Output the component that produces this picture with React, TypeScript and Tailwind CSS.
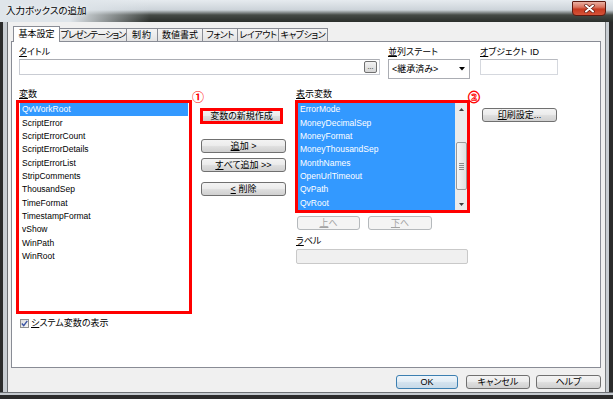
import React from "react";

const btn =
  "flex items-center justify-center border rounded-[3px] text-[9px] leading-none border-[#707070] text-black bg-[linear-gradient(to_bottom,#f3f3f3_0%,#ececec_45%,#dedede_55%,#d0d0d0_100%)]";
const btnOff =
  "flex items-center justify-center border rounded-[3px] text-[9px] leading-none border-[#b5b9bc] text-[#a3a3a3] bg-[#f4f4f4]";

function U({ children }: { children: React.ReactNode }) {
  return <span className="underline underline-offset-[1px]">{children}</span>;
}

const leftItems = [
  "QvWorkRoot",
  "ScriptError",
  "ScriptErrorCount",
  "ScriptErrorDetails",
  "ScriptErrorList",
  "StripComments",
  "ThousandSep",
  "TimeFormat",
  "TimestampFormat",
  "vShow",
  "WinPath",
  "WinRoot",
];

const rightItems = [
  "ErrorMode",
  "MoneyDecimalSep",
  "MoneyFormat",
  "MoneyThousandSep",
  "MonthNames",
  "OpenUrlTimeout",
  "QvPath",
  "QvRoot",
];

const tabs = [
  { t: "プレゼンテーション", w: "w-[68px] tracking-[-0.9px]" },
  { t: "制約", w: "w-[32px] tracking-[1px]" },
  { t: "数値書式", w: "w-[46px]" },
  { t: "フォント", w: "w-[36px] tracking-[-0.4px]" },
  { t: "レイアウト", w: "w-[42px] tracking-[-0.4px]" },
  { t: "キャプション", w: "w-[50px] tracking-[-0.4px]" },
];

export default function App() {
  return (
    <div className="w-[613px] h-[399px] flex flex-col overflow-hidden font-['Liberation_Sans','Noto_Sans_CJK_JP',sans-serif] [font-feature-settings:'palt'] text-black select-none">
      {/* Title bar */}
      <div className="h-[22px] flex items-start bg-[linear-gradient(to_right,#dfe5ea_0px,#dfe5ea_70px,rgba(223,229,234,0)_150px),linear-gradient(to_bottom,#e6ebef_0px,#ccd3d9_10px,#454a46_15px,#2a2e2b_22px)]">
        <span className="ml-[6px] mt-[5px] text-[9.5px] leading-[12px] [text-shadow:0_0_5px_#ffffff]">
          入力ボックスの追加
        </span>
        <div className="ml-auto mr-[7px] mt-[1px] w-[34px] h-[15px] rounded-b-[4px] rounded-t-[1px] border border-[#5e1a10] bg-[linear-gradient(to_bottom,#eab0a2_0%,#d9735e_40%,#c73a20_55%,#d4533a_100%)] flex items-center justify-center">
          <svg width="11" height="9" viewBox="0 0 11 9">
            <path d="M2 1.5 L9 7.5 M9 1.5 L2 7.5" stroke="#5a1a12" strokeWidth="3.4" strokeLinecap="round" />
            <path d="M2 1.5 L9 7.5 M9 1.5 L2 7.5" stroke="#ffffff" strokeWidth="2" strokeLinecap="round" />
          </svg>
        </div>
      </div>

      <div className="flex h-[370px]">
        {/* left frame */}
        <div className="w-[9px] bg-[linear-gradient(to_right,#2b2b2b_0px,#2b2b2b_3px,#c8cdd2_3px,#c8cdd2_7px,#6d7074_7px,#6d7074_8px,#f0f0f0_8px)]" />

        {/* client */}
        <div className="w-[595px] bg-[#f0f0f0] flex flex-col pt-[4px] pl-[2px] pr-[3px]">
          {/* tabs */}
          <div className="flex items-end h-[15px] pl-[2px]">
            <div className="relative z-10 w-[47px] h-[16px] -mb-px bg-white border border-b-0 border-[#898c95] flex items-center justify-center text-[9px] leading-none">
              基本設定
            </div>
            {tabs.map((tb) => (
              <div
                key={tb.t}
                className={
                  tb.w +
                  " h-[13px] -ml-px border border-b-0 border-[#898c95] bg-[linear-gradient(to_bottom,#f4f4f4,#e3e3e3)] flex items-center justify-center text-[9px] leading-none whitespace-nowrap overflow-hidden"
                }
              >
                {tb.t}
              </div>
            ))}
          </div>

          {/* panel */}
          <div className="h-[327px] border border-[#898c95] bg-white pt-[4px] pl-[4px] flex flex-col">
            {/* row 1 */}
            <div className="flex items-start">
              <div className="ml-[3px] w-[361px] flex flex-col">
                <div className="h-[12px] text-[9px] leading-[12px]">
                  <U>タ</U>イトル
                </div>
                <div className="mt-[1px] h-[16px] bg-white border border-[#c9ccd3] border-t-[#abadb3] flex items-center justify-end pr-[2px]">
                  <div className="w-[13px] h-[12px] rounded-[2px] border border-[#707070] bg-[linear-gradient(to_bottom,#f3f3f3,#d6d6d6)] flex items-end justify-center pb-[2px] text-[7px] leading-none">
                    ...
                  </div>
                </div>
              </div>
              <div className="ml-[8px] w-[82px] flex flex-col">
                <div className="h-[12px] text-[9px] leading-[12px] whitespace-nowrap">
                  <U>並</U>列ステート
                </div>
                <div className="mt-[1px] h-[20px] bg-white border border-[#abadb3] flex items-center pl-[3px] pr-[4px] text-[9px] leading-none">
                  <span>&lt;継承済み&gt;</span>
                  <svg className="ml-auto" width="6" height="4" viewBox="0 0 6 4">
                    <path d="M0 0 H6 L3 3.5 Z" fill="#000" />
                  </svg>
                </div>
              </div>
              <div className="ml-[10px] w-[78px] flex flex-col">
                <div className="h-[12px] text-[9px] leading-[12px] whitespace-nowrap">
                  <U>オ</U>ブジェクト ID
                </div>
                <div className="mt-[1px] h-[16px] bg-white border border-[#d5d8de] border-t-[#b8bac0]" />
              </div>
            </div>

            {/* row 2 */}
            <div className="mt-[9px] flex items-start">
              {/* left column */}
              <div className="w-[176px] flex flex-col">
                <div className="h-[12px] pl-[3px] text-[9px] leading-[12px]">
                  <U>変</U>数
                </div>
                <div className="relative h-[214px] border-[3px] border-[#ff0000] bg-white flex flex-col">
                  {leftItems.map((it, i) => (
                    <div
                      key={it}
                      className={
                        i === 0
                          ? "h-[13.34px] mx-[1px] pl-[2px] flex items-center bg-[#3399ff] text-white text-[8.5px] leading-none"
                          : "h-[13.34px] mx-[1px] pl-[2px] flex items-center text-[8.5px] leading-none"
                      }
                    >
                      {it}
                    </div>
                  ))}
                  <span className="absolute left-[173px] top-[-11px] text-[12px] leading-[12px] font-bold text-[#ff0000]">
                    ①
                  </span>
                </div>
                <div className="mt-[4px] pl-[4px] flex items-center h-[10px]">
                  <div className="w-[9px] h-[9px] border border-[#8e8f8f] bg-[linear-gradient(135deg,#dcdcdc,#f7f7f7)] flex items-center justify-center">
                    <svg width="7" height="7" viewBox="0 0 7 7">
                      <path d="M0.8 3.6 L2.7 5.6 L6.3 0.9" stroke="#3a54a4" strokeWidth="1.4" fill="none" />
                    </svg>
                  </div>
                  <span className="ml-[2px] text-[9px] leading-none">
                    <U>シ</U>ステム変数の表示
                  </span>
                </div>
              </div>

              {/* middle column */}
              <div className="ml-[8px] w-[87px] pt-[20px] flex flex-col">
                <div className="w-[83px] h-[16px] border-[3px] border-[#ff0000] bg-[#dedede] flex">
                  <div className="flex-1 flex items-center justify-center bg-[linear-gradient(to_bottom,#f3f3f3_0%,#ececec_45%,#dedede_55%,#d0d0d0_100%)] text-[9px] leading-none">
                    変数の新規作成
                  </div>
                </div>
                <div className={btn + " ml-[1px] mt-[15px] w-[85px] h-[14px]"}>
                  <U>追</U>加&nbsp;&gt;
                </div>
                <div className={btn + " ml-[1px] mt-[5px] w-[85px] h-[14px]"}>
                  <U>す</U>べて追加&nbsp;&gt;&gt;
                </div>
                <div className={btn + " ml-[1px] mt-[10px] w-[85px] h-[14px]"}>
                  <U>&lt;</U>&nbsp;削除
                </div>
              </div>

              {/* right column */}
              <div className="ml-[8px] w-[175px] flex flex-col">
                <div className="h-[12px] pl-[1px] text-[9px] leading-[12px]">
                  <U>表</U>示変数
                </div>
                <div className="relative h-[113px] border-[3px] border-[#ff0000] bg-white flex">
                  <div className="flex-1 bg-[#3399ff] flex flex-col">
                    {rightItems.map((it) => (
                      <div key={it} className="h-[13.34px] pl-[2px] flex items-center text-white text-[8.5px] leading-none">
                        {it}
                      </div>
                    ))}
                  </div>
                  <div className="w-[12px] bg-[#ebebeb] flex flex-col items-center">
                    <div className="h-[12px] w-full flex items-center justify-center">
                      <svg width="5" height="3" viewBox="0 0 5 3">
                        <path d="M0 3 L2.5 0 L5 3 Z" fill="#3c3c3c" />
                      </svg>
                    </div>
                    <div className="mt-[27px] w-[11px] h-[48px] rounded-[2px] border border-[#9a9a9a] bg-[linear-gradient(to_right,#f6f6f6,#e0e0e0)] flex flex-col items-center justify-center gap-[1px]">
                      <div className="w-[5px] h-px bg-[#8a8a8a]" />
                      <div className="w-[5px] h-px bg-[#8a8a8a]" />
                      <div className="w-[5px] h-px bg-[#8a8a8a]" />
                      <div className="w-[5px] h-px bg-[#8a8a8a]" />
                    </div>
                    <div className="flex-1" />
                    <div className="h-[12px] w-full flex items-center justify-center">
                      <svg width="5" height="3" viewBox="0 0 5 3">
                        <path d="M0 0 L5 0 L2.5 3 Z" fill="#3c3c3c" />
                      </svg>
                    </div>
                  </div>
                  <span className="absolute left-[170px] top-[-11px] text-[12px] leading-[12px] font-bold text-transparent [-webkit-text-stroke:0.8px_#ff0000]">
                    ②
                  </span>
                </div>
                <div className="mt-[3px] pl-[2px] flex gap-[8px]">
                  <div className={btnOff + " w-[63px] h-[14px]"}>
                    <U>上</U>へ
                  </div>
                  <div className={btnOff + " w-[64px] h-[14px]"}>
                    <U>下</U>へ
                  </div>
                </div>
                <div className="mt-[5px] h-[12px] pl-[1px] text-[9px] leading-[12px]">
                  <U>ラ</U>ベル
                </div>
                <div className="mt-[2px] ml-[1px] w-[172px] h-[15px] rounded-[2px] border border-[#c9c9c9] bg-[#f0f0f0]" />
              </div>

              {/* fourth column */}
              <div className="ml-[12px] pt-[20px]">
                <div className={btn + " w-[75px] h-[14px]"}>
                  <U>印</U>刷設定...
                </div>
              </div>
            </div>
          </div>

          {/* bottom buttons */}
          <div className="mt-[7px] h-[14px] flex justify-end">
            <div className="w-[62px] h-[14px] flex items-center justify-center border rounded-[3px] border-[#3c7fb1] bg-[linear-gradient(to_bottom,#eef5fb_0%,#e4eef6_45%,#d3e2ee_55%,#c8dae8_100%)] text-[9px] leading-none">
              OK
            </div>
            <div className={btn + " ml-[8px] w-[64px] h-[14px]"}>キャンセル</div>
            <div className={btn + " ml-[6px] w-[65px] h-[14px]"}>ヘルプ</div>
          </div>
        </div>

        {/* right frame */}
        <div className="w-[9px] bg-[linear-gradient(to_right,#f0f0f0_0px,#f0f0f0_1px,#7a7d80_1px,#7a7d80_2px,#c8cdd2_2px,#c8cdd2_5px,#2b2b2b_5px)]" />
      </div>

      {/* bottom frame */}
      <div className="h-[7px] bg-[linear-gradient(to_bottom,#6d7074_0px,#6d7074_1px,#c4c9ce_1px,#c4c9ce_3px,#2b2b2b_3px)]" />
    </div>
  );
}
